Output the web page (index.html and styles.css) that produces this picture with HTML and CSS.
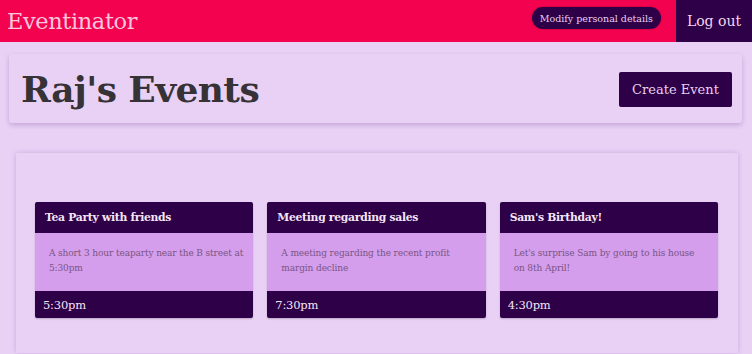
FILE: index.html
```html
<!DOCTYPE html>
<html>
<head>
<meta charset="utf-8">
<link rel="stylesheet" href="styles.css">
</head>
<body>
<header class="topbar">
  <div class="brand">Eventinator</div>
  <div class="top-actions">
    <button class="pill">Modify personal details</button>
    <button class="logout">Log out</button>
  </div>
</header>
<main class="page">
  <section class="title-card">
    <h1 class="title">Raj's Events</h1>
    <button class="create">Create Event</button>
  </section>
  <section class="events">
    <div class="grid">
      <article class="card">
        <div class="card-head">Tea Party with friends</div>
        <div class="card-body">A short 3 hour teaparty near the B street at 5:30pm</div>
        <div class="card-foot">5:30pm</div>
      </article>
      <article class="card">
        <div class="card-head">Meeting regarding sales</div>
        <div class="card-body">A meeting regarding the recent profit margin decline</div>
        <div class="card-foot">7:30pm</div>
      </article>
      <article class="card">
        <div class="card-head">Sam's Birthday!</div>
        <div class="card-body">Let's surprise Sam by going to his house on&nbsp;8th April!</div>
        <div class="card-foot">4:30pm</div>
      </article>
    </div>
  </section>
</main>
</body>
</html>
```
FILE: styles.css
```css
* { box-sizing: border-box; }
html, body { margin: 0; padding: 0; }
body {
  background: #e9d1f6;
  font-family: "DejaVu Serif", "Liberation Serif", serif;
  overflow: hidden;
  height: 354px;
}
button { font-family: inherit; border: none; cursor: pointer; }
.topbar {
  height: 42px;
  background: #f2024f;
  display: flex;
  align-items: stretch;
  justify-content: space-between;
}
.brand {
  color: #fbc5dc;
  font-size: 22.5px;
  padding-left: 7px;
  display: flex;
  align-items: center;
  letter-spacing: -0.4px;
}
.top-actions { display: flex; align-items: stretch; }
.pill {
  align-self: flex-start;
  margin-top: 7px;
  height: 22px;
  padding: 0 8px;
  border-radius: 11px;
  background: #2d0048;
  color: #e8d0f0;
  font-size: 9.5px;
  font-weight: 500;
  margin-right: 15px;
  box-shadow: 0 0 2px rgba(0,0,0,0.3);
}
.logout {
  width: 76px;
  background: #2d0048;
  color: #f3d6ef;
  font-size: 14px;
}
.page { padding: 12px 10px 0 9px; }
.title-card {
  height: 69px;
  background: #e9d1f6;
  box-shadow: 0 2px 5px rgba(90,40,120,0.25);
  border-radius: 3px;
  display: flex;
  align-items: center;
  justify-content: space-between;
  padding: 0 10px 0 12px;
}
.title {
  margin: 0;
  font-size: 36px;
  font-weight: bold;
  color: #363236;
  letter-spacing: -0.6px;
}
.create {
  width: 113px;
  height: 35px;
  background: #2d0048;
  color: #e8d0f0;
  font-size: 13px;
  border-radius: 2px;
  margin-top: 1px;
}
.events {
  margin: 30px 4px 0 7px;
  height: 200px;
  background: #e9d1f6;
  box-shadow: 0 0 5px rgba(90,40,120,0.22);
  padding: 49px 20px 0 19px;
}
.grid {
  display: grid;
  grid-template-columns: repeat(3, 1fr);
  gap: 14px;
}
.card {
  border-radius: 2px;
  overflow: hidden;
  box-shadow: 0 1px 2px rgba(0,0,0,0.2);
}
.card-head {
  height: 31px;
  background: #2d0048;
  color: #f4e6f6;
  font-weight: bold;
  font-size: 10.8px;
  letter-spacing: -0.3px;
  padding: 0 10px;
  display: flex;
  align-items: center;
}
.card-body {
  height: 58px;
  background: #d49eec;
  color: #7a5585;
  font-size: 9px;
  letter-spacing: -0.12px;
  line-height: 15px;
  padding: 13px 9px 0 14px;
}
.card-foot {
  height: 27px;
  background: #2d0048;
  color: #f4e6f6;
  font-size: 11.5px;
  letter-spacing: -0.2px;
  padding: 0 8px;
  display: flex;
  align-items: center;
}
```
